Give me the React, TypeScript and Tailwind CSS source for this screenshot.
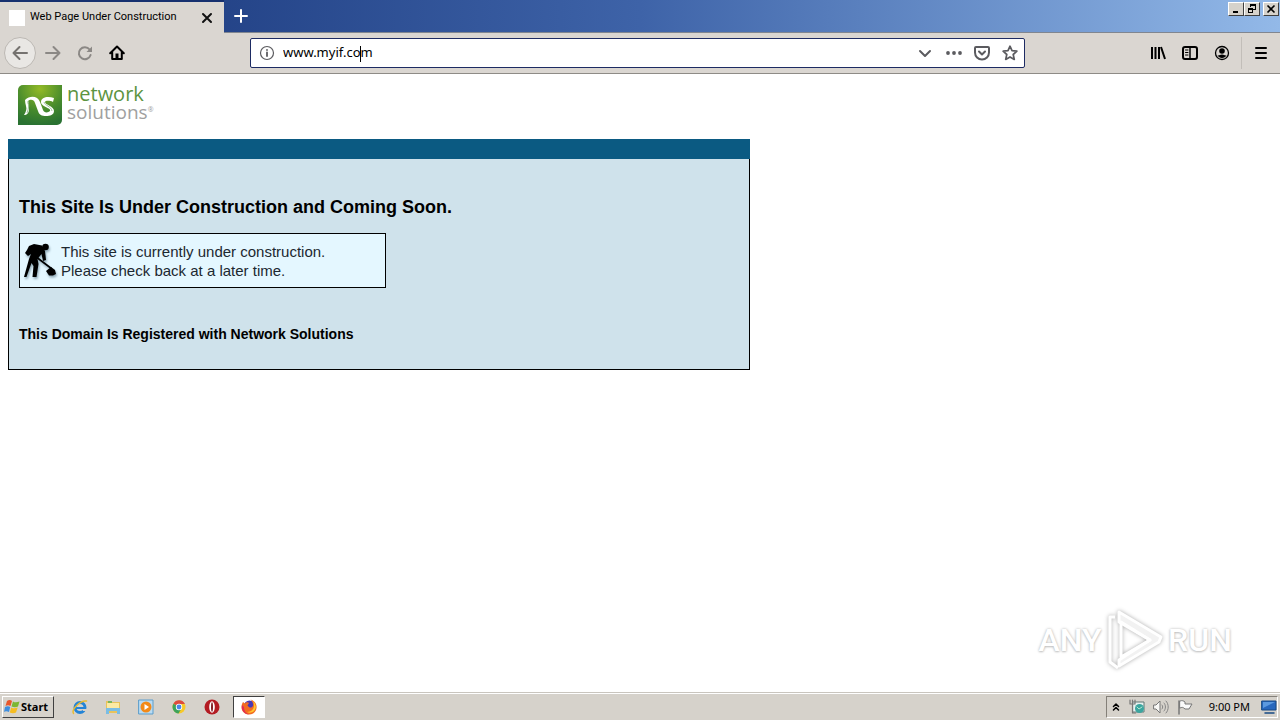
import React from "react";

type IconProps = {
  children: React.ReactNode;
  className?: string;
  size?: number;
};

function Icon({ children, className = "", size = 16 }: IconProps) {
  return (
    <svg
      width={size}
      height={size}
      viewBox="0 0 16 16"
      fill="none"
      stroke="currentColor"
      strokeWidth="2"
      strokeLinecap="round"
      strokeLinejoin="round"
      className={`shrink-0 ${className}`}
      aria-hidden="true"
    >
      {children}
    </svg>
  );
}

type ButtonProps = {
  label: string;
  className?: string;
  children: React.ReactNode;
};

function IconButton({ label, className = "", children }: ButtonProps) {
  return (
    <button
      type="button"
      aria-label={label}
      className={`flex h-8 w-8 shrink-0 items-center justify-center ${className}`}
    >
      {children}
    </button>
  );
}

function WindowButton({ label, className = "", children }: ButtonProps) {
  return (
    <button
      type="button"
      aria-label={label}
      className={`flex h-[14px] w-4 items-center justify-center border border-t-white border-l-white border-r-[#404040] border-b-[#404040] bg-[#d6d2cb] ${className}`}
    >
      <svg
        width="10"
        height="10"
        viewBox="0 0 10 10"
        fill="none"
        stroke="#000"
        shapeRendering="crispEdges"
        aria-hidden="true"
      >
        {children}
      </svg>
    </button>
  );
}

function TitleBar() {
  return (
    <header className="flex h-[33px] items-stretch bg-linear-to-r from-[#183478] via-[#3e63a8] to-[#93b9e8]">
      <div className="w-56 shrink-0 border-t-2 border-[#16306f]">
        <div className="flex h-full items-center bg-[#dad6d1] pl-[9px] pr-[9px]">
          <span className="h-4 w-4 bg-white" />
          <span className="ml-[5px] flex-1 whitespace-nowrap font-['Roboto',Tahoma,sans-serif] text-[11px]">
            Web Page Under Construction
          </span>
          <button type="button" aria-label="Close tab">
            <Icon>
              <path d="M4 4l8 8M12 4l-8 8" stroke="#111" />
            </Icon>
          </button>
        </div>
      </div>
      <div className="flex flex-1 items-start border-b border-[#808690] pr-px pl-px">
        <IconButton label="New tab" className="text-white">
          <Icon>
            <path d="M8 2v12M2 8h12" />
          </Icon>
        </IconButton>
        <div className="ml-auto flex pt-[2px]">
          <WindowButton label="Minimize">
            <path d="M2 8h5" strokeWidth="2" />
          </WindowButton>
          <WindowButton label="Restore">
            <path d="M3 1h6M3 0v3M8.500 1v5M6 5.500h3" />
            <path d="M3 1h6M1 4.500h5" strokeWidth="2" />
            <path d="M1.500 4v5M1 8.500h5M5.500 4v5" />
          </WindowButton>
          <WindowButton label="Close window" className="ml-[3px]">
            <path
              d="M1.500 1.500l7 7M8.500 1.500l-7 7"
              strokeWidth="1.600"
              shapeRendering="auto"
            />
          </WindowButton>
        </div>
      </div>
    </header>
  );
}

function AddressBar() {
  return (
    <div className="relative mx-[117px] flex h-[30px] min-w-0 flex-1 items-center rounded-[2px] border border-[#1d2b63] bg-white pl-2 text-[#5b5b5f]">
      <Icon>
        <circle cx="8" cy="8" r="6.500" strokeWidth="1.200" />
        <path d="M8 7.500v3.500" strokeWidth="1.800" />
        <path d="M8 5v.1" strokeWidth="1.800" />
      </Icon>
      <input
        type="text"
        aria-label="Address"
        defaultValue="www.myif.com"
        className="ml-2 min-w-0 flex-1 bg-transparent text-[13px] text-black outline-none"
      />
      <span className="absolute left-[109px] top-[7px] h-4 w-px bg-black" />
      <button type="button" aria-label="Show history" className="mr-[13px]">
        <Icon>
          <path d="M3 6l5 5 5-5" />
        </Icon>
      </button>
      <button type="button" aria-label="Page actions" className="mr-3">
        <Icon>
          <g fill="currentColor" stroke="none">
            <circle cx="2" cy="8" r="1.900" />
            <circle cx="8" cy="8" r="1.900" />
            <circle cx="14" cy="8" r="1.900" />
          </g>
        </Icon>
      </button>
      <button type="button" aria-label="Save to Pocket" className="mr-3">
        <Icon>
          <path d="M2 2h12a1 1 0 0 1 1 1v4.500a7 7 0 0 1-14 0V3a1 1 0 0 1 1-1z" />
          <path d="M5 6.500l3 3 3-3" />
        </Icon>
      </button>
      <button type="button" aria-label="Bookmark this page" className="mr-[6px]">
        <Icon>
          <path
            d="M8 1.200l2 4.500 4.900.5-3.700 3.300 1.100 4.900L8 11.900l-4.300 2.500 1.100-4.900L1.100 6.200 6 5.700z"
            strokeWidth="1.700"
          />
        </Icon>
      </button>
    </div>
  );
}

function Toolbar() {
  return (
    <nav className="flex h-[41px] items-center border-b border-[#8e8b86] bg-[#dad6d1] pl-1 pr-[3px]">
      <IconButton
        label="Back"
        className="mr-px rounded-full border border-[#bcb8b3] bg-[#e9e7e4] text-[#75726f]"
      >
        <Icon>
          <path d="M15 8H1.500M7.500 2L1.500 8l6 6" />
        </Icon>
      </IconButton>
      <IconButton label="Forward" className="text-[#8b8885]">
        <Icon>
          <path d="M1 8h13.500M8.500 2l6 6-6 6" />
        </Icon>
      </IconButton>
      <IconButton label="Reload" className="text-[#8b8885]">
        <Icon>
          <path d="M12.600 4.500A6 6 0 1 0 13.600 10" />
          <path d="M15 1.500V7H9.500z" fill="currentColor" stroke="none" />
        </Icon>
      </IconButton>
      <IconButton label="Home" className="text-black">
        <Icon>
          <path d="M1.200 8.300L8 1.500l6.800 6.800M3.200 7.500V14h9.600V7.500" />
          <path d="M6.500 8.500h3V14h-3z" fill="currentColor" stroke="none" />
        </Icon>
      </IconButton>
      <AddressBar />
      <IconButton label="Library">
        <Icon>
          <path
            d="M2 2v12M5.500 2v12M9 2v12M11 2l4 12"
            strokeLinecap="butt"
          />
        </Icon>
      </IconButton>
      <IconButton label="Sidebars">
        <Icon>
          <rect x="1" y="2" width="14" height="12" rx="2" />
          <path d="M8 2v12" strokeWidth="1.500" />
          <path d="M3.500 5h2.500M3.500 7.500h2.500M3.500 10h2.500" strokeWidth="1" />
        </Icon>
      </IconButton>
      <IconButton label="Account">
        <Icon>
          <circle cx="8" cy="8" r="6.500" strokeWidth="1.300" />
          <g fill="currentColor" stroke="none">
            <circle cx="8" cy="6" r="2.800" />
            <path d="M3.500 10.300c2 .5 2.200-.8 4.500-.8s2.500 1.300 4.500.8C11.500 12 10 13 8 13s-3.500-1-4.500-2.700z" />
          </g>
        </Icon>
      </IconButton>
      <span className="ml-[3px] h-8 w-px bg-[#c2beb9]" />
      <IconButton label="Menu" className="ml-[3px]">
        <Icon>
          <path d="M3 3h10M3 8h10M3 13h10" />
        </Icon>
      </IconButton>
    </nav>
  );
}

function Logo() {
  return (
    <a href="#" className="ml-[10px] flex h-10 w-fit gap-[5px]">
      <svg width="44" height="40" viewBox="0 0 44 40" aria-hidden="true">
        <defs>
          <radialGradient id="leaf" cx="0.500" cy="0.100" r="0.900">
            <stop offset="0" stopColor="#93ba27" />
            <stop offset="0.600" stopColor="#468a2c" />
            <stop offset="1" stopColor="#2a7232" />
          </radialGradient>
        </defs>
        <path d="M5 0h39v35a5 5 0 0 1-5 5H0V5a5 5 0 0 1 5-5z" fill="url(#leaf)" />
        <path
          d="M7 15c5-5 13-4 15 2l3 8c1 3 5 3 7 1 2-3-9-4-9-9 0-5 7-6 13-4l-1 4c-4-2-8-1-8 0 0 3 9 4 9 9 0 4-4 5-8 5-4 0-7-1-8-5l-3-8c-1-4-5-4-7-2-1 3 1 5 1 8 0 4-2 6-5 6 2-3 3-6 2-9-.5-2-1-4-1-6z"
          fill="#fff"
        />
        <path d="M10 16c1 3 1 7-1 12M26 17c1 4 7 4 8 9" fill="none" stroke="#9fc29b" />
      </svg>
      <span className="flex flex-col font-['Open_Sans',sans-serif] text-[20px] leading-[18px]">
        <span className="text-[#5c9440]">network</span>
        <span className="flex text-[19px] text-[#a0a0a0]">
          solutions
          <span className="text-[7px] leading-[14px]">®</span>
        </span>
      </span>
    </a>
  );
}

function Digger() {
  return (
    <svg
      width="36"
      height="38"
      viewBox="0 0 36 38"
      className="shrink-0 drop-shadow-[1px_2px_1px_#8fa8b5]"
      aria-hidden="true"
    >
      <circle cx="21.500" cy="5" r="3.300" />
      <path d="M5 4l5-2 8 1.500 3 5.500 1 9-3 1-1.500-7-4 5 1 5-2 13h-4l1-11-2-3-5 14H0l5-18 2-5-3 2-3-3 2-3z" />
      <path
        d="M7 11l21 16"
        fill="none"
        stroke="#000"
        strokeWidth="1.600"
      />
      <path d="M22 29l5-4 4 3 1 4-3 1.500h-4z" />
    </svg>
  );
}

function Watermark() {
  return (
    <div
      aria-label="ANY RUN"
      className="absolute right-12 bottom-[21px] flex h-[62px] items-center gap-1 font-['Roboto',sans-serif] text-[32px] font-medium text-white [text-shadow:0_0_3px_#bbb,0_1px_2px_#ccc]"
    >
      <span className="w-16 text-center">ANY</span>
      <svg
        width="58"
        height="62"
        viewBox="0 0 58 62"
        fill="none"
        stroke="#fff"
        strokeWidth="3"
        strokeLinejoin="round"
        className="drop-shadow-[0_0_2px_#aaa]"
        aria-hidden="true"
      >
        <path d="M13 3l42 25-2 5-40 24V51l31-20-31-18z" fill="#f2f2f2" />
        <path d="M15 13v35l29-17z" />
        <path d="M9 8H4v45l8 6" />
      </svg>
      <span className="w-16 text-center">RUN</span>
    </div>
  );
}

function Content() {
  return (
    <main className="relative flex-1 bg-white px-2 pt-[11px] font-['Liberation_Sans',Arial,sans-serif]">
      <Logo />
      <section className="mt-[14px] w-[742px] max-w-full border border-t-0 border-black bg-[#cfe2eb]">
        <div className="-mx-px h-5 bg-[#0b5a82]" />
        <div className="px-[10px] pt-9 pb-[25px]">
          <h1 className="text-[18px] leading-6 font-bold">
            This Site Is Under Construction and Coming Soon.
          </h1>
          <div className="mt-[14px] flex h-[55px] w-[367px] max-w-full items-center gap-px border border-black bg-[#e4f7ff] pl-1">
            <Digger />
            <p className="text-[15px] leading-[19px] text-[#1c2830]">
              This site is currently under construction.
              <br />
              Please check back at a later time.
            </p>
          </div>
          <h2 className="mt-9 text-[14px] leading-5 font-bold">
            This Domain Is Registered with Network Solutions
          </h2>
        </div>
      </section>
      <Watermark />
    </main>
  );
}

function WindowsFlag() {
  return (
    <Icon>
      <g stroke="none">
        <path d="M3 2c2-1.500 4-1 5 0L6.500 7C5 6 3 6 1.500 7z" fill="#e9572b" />
        <path d="M9 2.500c2 1.200 4 1 6.500 0L14 7.500c-2 1-4 1-6.500 0z" fill="#7cb733" />
        <path d="M1 8c2-1.300 4-1 5.200 0L5 13c-2-1.200-4-1-5 0z" fill="#3f8ede" />
        <path d="M7.200 8.500c2 1.200 4 1 6.500 0L12 13.500c-2 1-4 1-6.200 0z" fill="#f6bd22" />
      </g>
    </Icon>
  );
}

function Taskbar() {
  return (
    <footer className="flex h-7 items-center border-t border-[#c9c5be] bg-[#d6d2cb] pt-px pl-[2px] pr-[2px] shadow-[inset_0_1px_0_#fff]">
      <button
        type="button"
        className="flex h-[22px] w-[52px] items-center gap-px border border-t-white border-l-white border-r-[#404040] border-b-[#404040] pl-px text-[11px] leading-4 font-bold"
      >
        <WindowsFlag />
        Start
      </button>
      <div className="ml-[10px] flex h-[22px] items-center gap-px">
        <IconButton label="Internet Explorer">
          <Icon>
            <circle cx="8" cy="8.500" r="5" stroke="#2484d6" strokeWidth="3" />
            <path d="M4 9h9" stroke="#2484d6" strokeLinecap="butt" />
            <path d="M11 11h5" stroke="#d6d2cb" strokeLinecap="butt" />
            <path d="M1.500 14.500C-1 10 9 1 14.500 2" stroke="#e8bb32" strokeWidth="1.500" />
          </Icon>
        </IconButton>
        <IconButton label="Explorer">
          <Icon>
            <g stroke="none">
              <path d="M1 2h5l1 1h8v11H1z" fill="#e8c35b" />
              <path d="M2 4h12v6H2z" fill="#fbeaa4" />
              <path d="M3 2h4v2H3z" fill="#79b55c" />
              <path d="M1 9h14v6h-3v-3H4v3H1z" fill="#79bde5" />
            </g>
          </Icon>
        </IconButton>
        <IconButton label="Media Player">
          <Icon>
            <path d="M1 1h14v14H1z" fill="#b9dbf2" stroke="#5b9dcc" strokeWidth="1" />
            <circle cx="8" cy="8" r="5.500" fill="#f28a18" stroke="none" />
            <path d="M6.500 5v6l4.500-3z" fill="#fff" stroke="none" />
          </Icon>
        </IconButton>
        <IconButton label="Chrome">
          <Icon>
            <g stroke="none">
              <circle cx="8" cy="8" r="6.500" fill="#f7c928" />
              <path d="M8 8L2.400 4.700A6.500 6.500 0 0 1 14 5H8z" fill="#dd4b3e" />
              <path d="M8 8L2.400 4.700A6.500 6.500 0 0 0 7.500 14.500L10.500 9.500z" fill="#3da35a" />
              <circle cx="8" cy="8" r="3.200" fill="#fff" />
              <circle cx="8" cy="8" r="2.400" fill="#4a87e8" />
            </g>
          </Icon>
        </IconButton>
        <IconButton label="Opera">
          <Icon>
            <circle cx="8" cy="8" r="7.500" fill="#b31b22" stroke="none" />
            <ellipse cx="8" cy="8" rx="2.800" ry="5.800" fill="#fff" stroke="none" />
            <ellipse cx="8" cy="8" rx="1" ry="4.800" fill="#842027" stroke="none" />
          </Icon>
        </IconButton>
        <button
          type="button"
          aria-label="Firefox"
          className="ml-1 flex h-[22px] w-8 items-center justify-center border border-t-[#404040] border-l-[#404040] border-r-white border-b-white bg-white"
        >
          <Icon>
            <g stroke="none">
              <circle cx="8.500" cy="7" r="5.500" fill="#4939b5" />
              <path
                d="M2 3l2 1.500C5 3 7 3 8 4L6.500 6.500C8 9 11 9.500 12 6.500 12.500 4 11 2 9.500 0.500c4 1 6.500 4.500 6 8.500-.5 4-4 6.500-7.500 6.500C3.500 15.500.5 12 .5 8.500.5 6 1 4.500 2 3z"
                fill="#f36b21"
              />
              <path d="M12 2c3 3 4 7 1 10-2 2-5 2-7 1 4 0 7-3 7-6 0-2-.5-3.500-1-5z" fill="#ffc52e" />
              <path d="M1 6c-1 5 2 9 7 9.500C4 14 3 11 3 8z" fill="#e12c56" />
            </g>
          </Icon>
        </button>
      </div>
      <div className="ml-auto flex h-[22px] items-center border border-t-[#848079] border-l-[#848079] border-r-white border-b-white pl-[5px] text-[11px] leading-4">
        <button type="button" aria-label="Show hidden icons">
          <Icon size={8}>
            <path d="M3 7l5-5 5 5M3 14l5-5 5 5" stroke="#000" strokeWidth="3" />
          </Icon>
        </button>
        <span className="ml-[9px] flex gap-2">
          <Icon>
            <path d="M4 3h11v10H4z" fill="#e6f1ef" stroke="#637775" strokeWidth="1" />
            <circle cx="10.500" cy="9.500" r="4.500" fill="#3ba59f" stroke="none" />
            <path d="M8 8l2 2 3-2" stroke="#b5e7cf" strokeWidth="1" />
            <path d="M1 1v4h5V1M3.500 1v13h3" stroke="#777" strokeWidth="1.200" />
          </Icon>
          <Icon>
            <path d="M1 6h2l4-4v12l-4-4H1z" fill="#f8f8f6" stroke="#777" strokeWidth="1" />
            <path d="M9 6c1 1 1 3 0 4M11 4c2 2 2 6 0 8M13 2c3 3 3 9 0 12" stroke="#858585" strokeWidth="1" />
          </Icon>
          <Icon>
            <path d="M2 2v13" stroke="#777" strokeWidth="1.500" />
            <path d="M3 2c2-1 4 0 5 1v2h7l-3 5H8C6 8 5 8 3 9z" fill="#fafafa" stroke="#777" strokeWidth="1" />
          </Icon>
        </span>
        <time className="ml-4 whitespace-nowrap">9:00 PM</time>
        <button type="button" aria-label="Show desktop" className="ml-[11px]">
          <Icon>
            <path d="M1 2h14v9H1z" fill="#2767bd" stroke="#174984" strokeWidth="1" />
            <path d="M2 3h12L2 9z" fill="#5b99df" stroke="none" />
            <path d="M4 14h9" stroke="#174984" strokeWidth="1.500" />
          </Icon>
        </button>
      </div>
    </footer>
  );
}

export default function App() {
  return (
    <div className="flex min-h-screen flex-col bg-white font-['Noto_Sans',Tahoma,sans-serif] text-black">
      <TitleBar />
      <Toolbar />
      <Content />
      <Taskbar />
    </div>
  );
}
